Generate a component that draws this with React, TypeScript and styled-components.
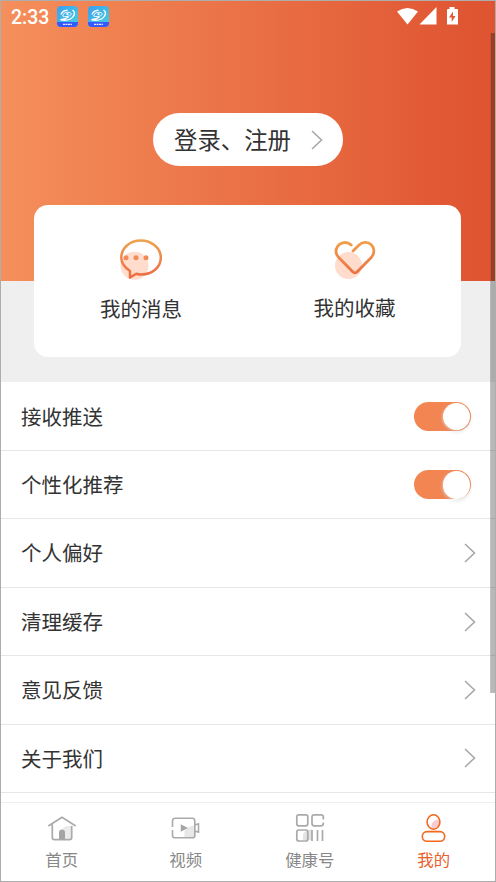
import React from 'react';
import styled, { createGlobalStyle } from 'styled-components';

const GlobalStyle = createGlobalStyle`
  * { box-sizing: border-box; }
  body { margin: 0; background: #fff; }
`;

const Screen = styled.div`
  position: relative;
  display: flex;
  flex-direction: column;
  width: 496px;
  height: 882px;
  overflow: hidden;
  border: 1px solid #adadad;
  background: #fff;
  color: #333;
  font-family: Roboto, 'Noto Sans CJK SC', sans-serif;
`;

const Top = styled.section`
  flex: 0 0 381px;
  display: flex;
  flex-direction: column;
  align-items: center;
  background: linear-gradient(90deg, #f58f5b 0%, #df5431 97%) 0 0 / 100% 280px no-repeat #efefef;
`;

const StatusBar = styled.header`
  align-self: stretch;
  height: 32px;
  display: flex;
  align-items: center;
  padding: 0 35px 2px 10px;
  color: #fff;
`;

const Time = styled.span`
  width: 46px;
  padding-top: 3px;
  font-size: 19.5px;
  font-weight: 500;
  line-height: 29px;
`;

const AppIcon = styled.svg`
  width: 21px;
  height: 21px;
  margin-right: 9.5px;
`;

const SystemIcons = styled.svg`
  width: 64px;
  height: 20px;
  margin-left: auto;
`;

const LoginButton = styled.button`
  width: 190px;
  height: 53px;
  margin: 80px 0 0;
  padding: 0 20px 0 21px;
  border: 0;
  border-radius: 27px;
  background: #fff;
  color: #333;
  display: flex;
  align-items: center;
  justify-content: space-between;
  font: 400 23.4px/53px 'Noto Sans CJK SC', sans-serif;
  white-space: nowrap;
`;

const Card = styled.div`
  width: 427px;
  height: 151.5px;
  margin-top: 39.3px;
  margin-right: 0.5px;
  border-radius: 14px;
  background: #fff;
  display: grid;
  grid-template-columns: 1fr 1fr;
`;

const Shortcut = styled.div<{ $lift?: number }>`
  display: flex;
  flex-direction: column;
  align-items: center;
  padding-top: 28.5px;
  font-size: 20.5px;
  line-height: 30px;
  & > span { margin-top: ${p => 11 - (p.$lift ?? 0)}px; }
`;

const ShortcutIcon = styled.svg`
  width: 50px;
  height: 50px;
`;

const List = styled.main`
  flex: 1;
  min-height: 0;
  padding-top: 0.7px;
  overflow: hidden;
`;

const Row = styled.div`
  height: 68.4px;
  padding: 0 19px 0 20px;
  border-bottom: 1px solid #e7e7e7;
  display: flex;
  align-items: center;
  justify-content: space-between;
  font-size: 20.5px;
  line-height: 30px;
  & > span { padding-top: 2.4px; }
`;

const Toggle = styled.div`
  width: 57px;
  height: 29px;
  margin-right: 5px;
  padding: 0.7px;
  border-radius: 15px;
  background: #f28552;
  display: flex;
  justify-content: flex-end;
`;

const Knob = styled.span`
  width: 27.6px;
  height: 27.6px;
  border-radius: 50%;
  background: #fff;
  box-shadow: -1px 1px 3px rgba(255, 255, 255, 0.45), 0 2px 4px rgba(0, 0, 0, 0.1);
`;

const Nav = styled.nav`
  flex: 0 0 79px;
  border-top: 1px solid #eee;
  background: #fff;
  display: grid;
  grid-template-columns: repeat(4, 1fr);
`;

const Tab = styled.div<{ $active?: boolean; $shift?: number }>`
  display: flex;
  flex-direction: column;
  align-items: center;
  padding-top: 8px;
  transform: translateX(${p => p.$shift ?? 0}px);
  color: ${p => (p.$active ? '#e9602b' : '#888')};
  font-size: 16.4px;
  line-height: 24px;
  & > span { margin-top: 4px; }
`;

const TabIcon = styled.svg`
  width: 34px;
  height: 34px;
`;

const Scrollbar = styled.div`
  position: absolute;
  top: 32px;
  right: 0;
  width: 5px;
  height: 660px;
  background: rgba(0, 0, 0, 0.28);
  border-left: 1px solid rgba(255, 255, 255, 0.15);
`;

const Chevron = () => (
  <svg width="12" height="20" viewBox="0 0 12 20" fill="none" stroke="#a5a5a5" strokeWidth="1.5">
    <path d="M1 1L10.5 10L1 19" />
  </svg>
);

const Launcher = () => (
  <AppIcon viewBox="0 0 21 21">
    <defs>
      <linearGradient id="launcher" x1="0" y1="0" x2="1" y2="1">
        <stop stopColor="#3b9ff0" /><stop offset="1" stopColor="#47d0df" />
      </linearGradient>
      <clipPath id="tile"><rect width="21" height="21" rx="4" /></clipPath>
    </defs>
    <g clipPath="url(#tile)">
      <rect width="21" height="21" fill="url(#launcher)" />
      <rect y="16" width="21" height="5" fill="#3659ff" />
      <path d="M6 18.4H15" stroke="#fff" strokeWidth="1.2" strokeDasharray="2 .5" opacity=".85" />
      <path d="M4 8.5Q5.5 4.5 10.5 4.2M15.5 4Q18.8 6.5 16.5 10C14 14 9 14.8 3.5 13.8Q9 13 11.5 11" fill="none" stroke="#fff" strokeWidth="1.4" />
      <path d="M5.5 10Q6.5 6.3 10.5 6.2Q14 6.2 14.5 8Q13 10.5 10 10.6Q7 10.8 5.5 10" fill="none" stroke="#fff" strokeWidth=".9" />
      <circle cx="10.5" cy="8.2" r="1.1" fill="#fff" />
    </g>
  </AppIcon>
);

const MessageIcon = () => (
  <ShortcutIcon viewBox="0 0 50 50" fill="none">
    <defs>
      <linearGradient id="warm" x1="0" y1="4" x2="0" y2="45" gradientUnits="userSpaceOnUse">
        <stop stopColor="#efa54d" /><stop offset="1" stopColor="#ed6843" />
      </linearGradient>
    </defs>
    <circle cx="18.5" cy="31.8" r="14" fill="#ffdccc" />
    <path d="M14 43.5V37C9 33.7 5.3 29.2 5.3 23.8C5.3 14 13.8 6.5 24.8 6.5S44.8 14 44.8 23.8S36 40.5 25.5 40.5Q22.8 40.5 20.3 39.7Z" stroke="url(#warm)" strokeWidth="2.5" strokeLinejoin="round" />
    <g fill="#f08b5a"><circle cx="10" cy="23.8" r="2.5" /><circle cx="20" cy="23.8" r="2.5" /><circle cx="30" cy="23.8" r="2.5" /></g>
  </ShortcutIcon>
);

const HeartIcon = () => (
  <ShortcutIcon viewBox="0 0 50 50" fill="none">
    <circle cx="18.5" cy="31.5" r="13.5" fill="#ffdccc" />
    <path d="M21.2 11C17 7 10.5 8 7.5 12.5C5 16.5 6 20.5 9 23.7L22.5 37.5Q25 40.1 27.5 37.5L41 23.7C44.5 20 45 14.5 41.5 11C37.5 7 32 8 28.5 11.5L23 17" stroke="url(#warm)" strokeWidth="2.8" strokeLinecap="round" strokeLinejoin="round" />
  </ShortcutIcon>
);

const HomeIcon = () => (
  <TabIcon viewBox="0 0 34 34" fill="none" stroke="#aaa" strokeWidth="1.7">
    <path d="M17 20Q18 15 23 15H27V28.5H17Z" fill="#ebebeb" stroke="none" />
    <path d="M3.3 15L17 6.3L30.7 15M7.3 13.5V26.5Q7.3 28.7 9.5 28.7H24.5Q26.7 28.7 26.7 26.5V15" />
    <path d="M14 28.5V21.5Q14 18.5 17 18.5T20 21.5V28.5Z" fill="#a4a4a4" stroke="none" />
  </TabIcon>
);

const VideoIcon = () => (
  <TabIcon viewBox="0 0 34 34" fill="none" stroke="#aaa" strokeWidth="1.6">
    <path d="M16 27V20Q19 14.5 27 14.5V27Z" fill="#e8e8e8" stroke="none" />
    <path d="M4 16V10Q4 7.3 6.7 7.3H24Q26.3 7.3 26.3 10V24.5Q26.3 26.8 24 26.8H6.5Q4 26.8 4 24.5V19M26.3 14L30 12.8V21.2L26.3 20Z" />
    <path d="M12.3 13.2L19.3 17L12.3 20.8Z" fill="#a4a4a4" stroke="none" />
  </TabIcon>
);

const GridIcon = () => (
  <TabIcon viewBox="0 0 34 34" fill="none" stroke="#aaa" strokeWidth="1.7">
    <path d="M10 29V23Q13 18.5 19 18.5V29Z" fill="#e3e3e3" stroke="none" />
    <rect x="3.8" y="3.8" width="11" height="11" rx="2" />
    <path d="M30.3 8.5V6Q30.3 3.8 28 3.8H21.2Q19 3.8 19 6V12.5Q19 14.8 21.2 14.8H28Q30.3 14.8 30.3 12.5V11.5" />
    <rect x="3.8" y="19" width="11" height="11" rx="2" />
    <path d="M19 19V30M24.5 19V30M29.5 19V30" />
  </TabIcon>
);

const PersonIcon = () => (
  <TabIcon viewBox="0 0 34 34" fill="none" stroke="#f2691f" strokeWidth="1.6">
    <path d="M14.5 17Q14.5 8.5 23 8.5L22 14L17 18Z" fill="#f8cbd0" stroke="none" />
    <ellipse cx="17" cy="11" rx="6.4" ry="7.2" />
    <rect x="5.8" y="20.6" width="22.4" height="9.6" rx="4.7" />
  </TabIcon>
);

export default function App() {
  return (
    <>
      <GlobalStyle />
      <Screen>
        <Top>
          <StatusBar>
            <Time>2:33</Time>
            <Launcher />
            <Launcher />
            <SystemIcons viewBox="0 0 64 20" fill="#fff">
              <path d="M1 5.5Q11.5-1.5 22 5.5L11.5 18.5ZM40.5 1V18.5H23.5ZM53.5 1H58.5V3H61Q62 3 62 4V18.5H51V4Q51 3 52 3H53.5Z" />
              <path d="M57 5.5L53 11.5H55.7V16L59.5 10H57Z" fill="#e15a34" />
            </SystemIcons>
          </StatusBar>
          <LoginButton><span>登录、注册</span><Chevron /></LoginButton>
          <Card>
            <Shortcut><MessageIcon /><span>我的消息</span></Shortcut>
            <Shortcut $lift={1}><HeartIcon /><span>我的收藏</span></Shortcut>
          </Card>
        </Top>
        <List>
          {['接收推送', '个性化推荐'].map(label => (
            <Row key={label}><span>{label}</span><Toggle><Knob /></Toggle></Row>
          ))}
          {['个人偏好', '清理缓存', '意见反馈', '关于我们'].map(label => (
            <Row key={label}><span>{label}</span><Chevron /></Row>
          ))}
        </List>
        <Nav>
          <Tab $shift={-1}><HomeIcon /><span>首页</span></Tab>
          <Tab $shift={-0.5}><VideoIcon /><span>视频</span></Tab>
          <Tab><GridIcon /><span>健康号</span></Tab>
          <Tab $active $shift={0.5}><PersonIcon /><span>我的</span></Tab>
        </Nav>
        <Scrollbar />
      </Screen>
    </>
  );
}
